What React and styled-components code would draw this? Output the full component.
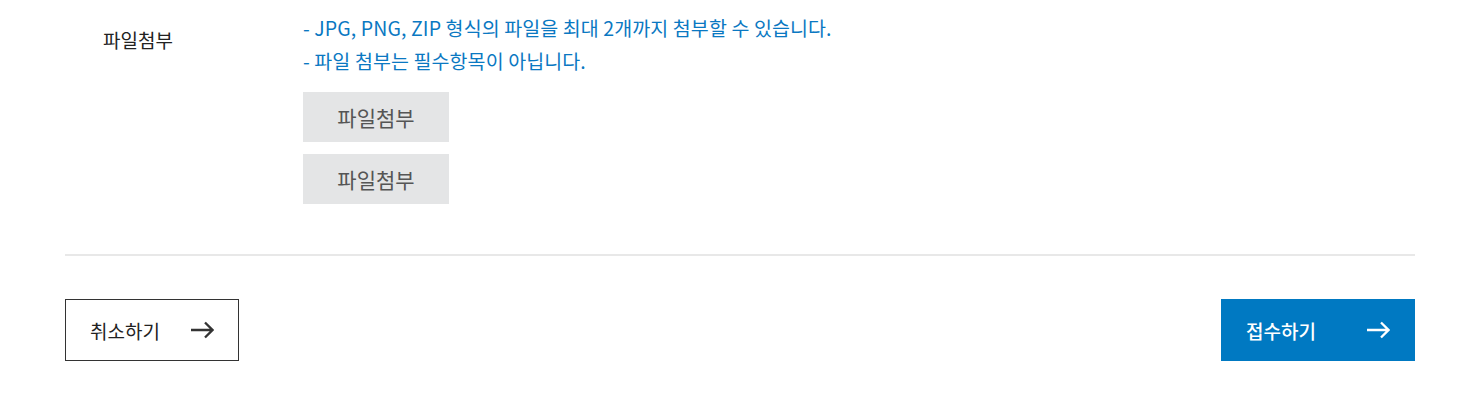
import React from "react";
import styled, { createGlobalStyle } from "styled-components";

const Global = createGlobalStyle`
  html, body { margin: 0; padding: 0; background: #fff; }
  body { font-family: "Noto Sans CJK KR", "Noto Sans", sans-serif; color: #222; }
  * { box-sizing: border-box; }
`;

const Page = styled.div`
  width: 1350px;
  margin-left: 65px;
`;

const FieldRow = styled.div`
  display: flex;
  padding-top: 11px;
  padding-bottom: 50px;
  border-bottom: 2px solid #e8e8e8;
`;

const Label = styled.div`
  width: 238px;
  padding-left: 38px;
  padding-top: 12px;
  font-size: 19px;
  line-height: 33px;
  color: #222;
`;

const Body = styled.div`
  display: flex;
  flex-direction: column;
`;

const Note = styled.p`
  margin: 0;
  font-size: 19.5px;
  line-height: 33px;
  letter-spacing: 0.1px;
  color: #0a78c2;
`;

const FileButtons = styled.div`
  display: flex;
  flex-direction: column;
  gap: 12px;
  margin-top: 15px;
`;

const FileButton = styled.button`
  width: 146px;
  height: 50px;
  border: 0;
  background: #e4e5e6;
  color: #555;
  font-family: inherit;
  font-size: 21px;
  padding: 0;
  cursor: pointer;
`;

const Actions = styled.div`
  display: flex;
  justify-content: space-between;
  margin-top: 43px;
`;

const ActionButton = styled.button`
  display: flex;
  align-items: center;
  justify-content: space-between;
  width: ${(p) => p.$w}px;
  height: 62px;
  padding: 0 24px 0 24px;
  border: 1px solid ${(p) => (p.$primary ? "#0079c2" : "#333")};
  background: ${(p) => (p.$primary ? "#0079c2" : "#fff")};
  color: ${(p) => (p.$primary ? "#fff" : "#222")};
  font-family: inherit;
  font-size: 19px;
  font-weight: ${(p) => (p.$primary ? 500 : 400)};
  cursor: pointer;
`;

const Arrow = ({ color }) => (
  <svg width="23" height="24" viewBox="0 0 23 24" fill="none">
    <path d="M0 12h21.5M14 4.5L21.5 12L14 19.5" stroke={color} strokeWidth="2.3" strokeLinecap="butt" strokeLinejoin="miter" />
  </svg>
);

export default function App() {
  return (
    <>
      <Global />
      <Page>
        <FieldRow>
          <Label>파일첨부</Label>
          <Body>
            <Note>- JPG, PNG, ZIP 형식의 파일을 최대 2개까지 첨부할 수 있습니다.</Note>
            <Note>- 파일 첨부는 필수항목이 아닙니다.</Note>
            <FileButtons>
              <FileButton>파일첨부</FileButton>
              <FileButton>파일첨부</FileButton>
            </FileButtons>
          </Body>
        </FieldRow>
        <Actions>
          <ActionButton $w={174}>
            취소하기
            <Arrow color="#333" />
          </ActionButton>
          <ActionButton $w={194} $primary>
            접수하기
            <Arrow color="#fff" />
          </ActionButton>
        </Actions>
      </Page>
    </>
  );
}
